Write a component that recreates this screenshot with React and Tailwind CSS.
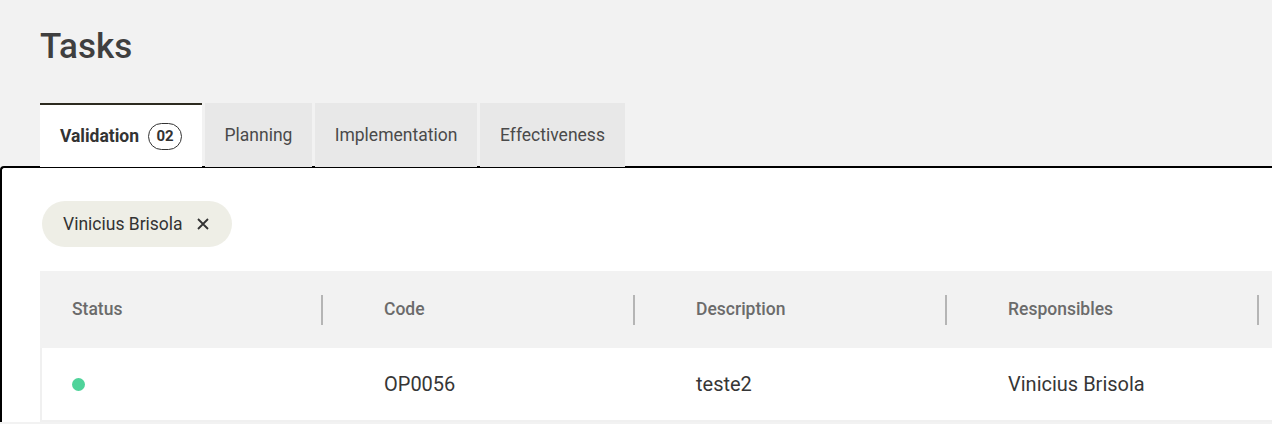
import React from "react";

const tabs = [
  { label: "Validation", count: "02", active: true, w: "w-[162px]" },
  { label: "Planning", w: "w-[107px]" },
  { label: "Implementation", w: "w-[162px]" },
  { label: "Effectiveness", w: "w-[145px]" },
];

const columnas = ["Status", "Code", "Description", "Responsibles"];

export default function App() {
  return (
    <div className="w-[1272px] h-[424px] overflow-hidden bg-[#f2f2f2] font-['Roboto',sans-serif]">
      <div className="pl-10 pt-[26px]">
        <h1 className="text-[35px] leading-[42px] font-medium text-[#3f3f3f]">Tasks</h1>
      </div>

      {/* tabs */}
      <div className="flex gap-[3px] pl-10 mt-[35px]">
        {tabs.map((tab) => (
          <div
            key={tab.label}
            className={
              tab.active
                ? `${tab.w} h-[64px] bg-white border-t-2 border-[#2d2b20] flex items-center justify-center gap-[9px]`
                : `${tab.w} h-[64px] bg-[#e8e8e8] flex items-center justify-center`
            }
          >
            <span
              className={
                tab.active
                  ? "text-[17.5px] font-bold text-[#333333]"
                  : "text-[17.5px] text-[#4a4a4a]"
              }
            >
              {tab.label}
            </span>
            {tab.count && (
              <span className="h-[27px] px-[6px] min-w-[34px] rounded-full border border-[#333333] text-[15px] font-bold text-[#333333] flex items-center justify-center">
                {tab.count}
              </span>
            )}
          </div>
        ))}
      </div>

      {/* card */}
      <div className="w-[1300px] bg-white border-t-2 border-l-2 border-black rounded-tl-[4px] -mt-[1px] pt-[33px] pl-[38px]">
        <div className="ml-[2px] inline-flex items-center h-[46px] rounded-full bg-[#eeeee6] pl-[21px] pr-[22px] gap-[13px] text-[17.5px] text-[#333333]">
          <span>Vinicius Brisola</span>
          <svg width="14" height="14" viewBox="0 0 14 14" fill="none" stroke="#333333" strokeWidth="1.8">
            <path d="M2 2L12 12M12 2L2 12" />
          </svg>
        </div>

        <div className="mt-[24px]">
          <div className="grid grid-cols-[312px_312px_312px_312px_40px] h-[77px] bg-[#f2f2f2]">
            {columnas.map((col) => (
              <div key={col} className="flex items-center justify-between pl-[32px] pr-[29px]">
                <span className="text-[17.5px] font-medium text-[#6b6b6b]">{col}</span>
                <span className="w-[2px] h-[30px] bg-[#b5b5b5]"></span>
              </div>
            ))}
            <div></div>
          </div>
          <div className="grid grid-cols-[310px_312px_312px_312px_40px] h-[74px] border-l-2 border-b-2 border-[#f0f0f0] items-center text-[20px] text-[#363636]">
            <div className="pl-[30px] flex items-center">
              <span className="w-[13px] h-[13px] rounded-full bg-[#4fd39a]"></span>
            </div>
            <div className="pl-[32px]">OP0056</div>
            <div className="pl-[32px]">teste2</div>
            <div className="pl-[32px]">Vinicius Brisola</div>
            <div></div>
          </div>
        </div>
      </div>
    </div>
  );
}
